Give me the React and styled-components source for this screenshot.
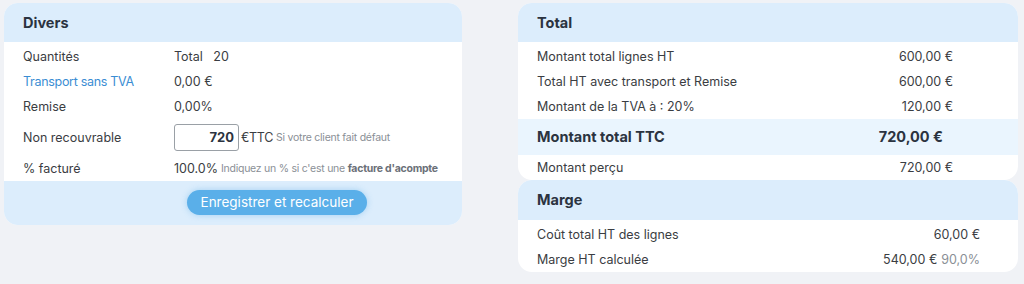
import React from 'react';
import styled, { createGlobalStyle } from 'styled-components';

const colors = {
  page: '#f0f2f6',
  head: '#dcedfc',
  highlight: '#eaf5fe',
  title: '#2b3340',
  text: '#3a3d42',
  muted: '#8a8f96',
  link: '#3b8dd3',
  button: '#5aafe9',
};

const GlobalStyle = createGlobalStyle`
  body {
    margin: 0;
    background: ${colors.page};
    font-family: 'Inter', 'Noto Sans', sans-serif;
    color: ${colors.text};
    -webkit-font-smoothing: antialiased;
  }
`;

const Page = styled.div`
  display: flex;
  align-items: flex-start;
  gap: 56px;
  padding: 3px 4px;
`;

const Card = styled.div`
  width: ${(p) => p.width}px;
  background: white;
  border-radius: 14px;
  overflow: hidden;
`;

const Column = styled.div`
  display: flex;
  flex-direction: column;
  width: 500px;
`;

const CardHead = styled.div`
  height: ${(p) => p.height || 39}px;
  display: flex;
  align-items: center;
  padding-left: 19px;
  background: ${colors.head};
  font-size: 14.5px;
  font-weight: 700;
  color: ${colors.title};
`;

const Body = styled.div`
  padding-top: 1.5px;
`;

const Row = styled.div`
  display: grid;
  grid-template-columns: ${(p) => p.cols || '151px 1fr'};
  align-items: center;
  height: ${(p) => p.height || 25}px;
  padding: 0 ${(p) => p.right || 0}px 0 19px;
  font-size: 12.5px;
  background: ${(p) => (p.strong ? colors.highlight : 'transparent')};
  ${(p) => p.strong && `font-size: 14.5px; font-weight: 700; color: ${colors.title};`}
`;

const Label = styled.span`
  color: ${(p) => (p.link ? colors.link : 'inherit')};
  letter-spacing: ${(p) => (p.link ? '-0.3px' : '0')};
`;

const Value = styled.span`
  display: flex;
  align-items: center;
  white-space: nowrap;
  justify-content: ${(p) => (p.end ? 'flex-end' : 'flex-start')};
`;

const Hint = styled.span`
  margin-left: 3px;
  font-size: 10.5px;
  letter-spacing: -0.25px;
  color: ${colors.muted};
  b {
    font-weight: 700;
    color: #6b7078;
  }
`;

const Pct = styled.span`
  margin-left: 4px;
  color: ${colors.muted};
`;

const Amount = styled.input`
  width: 65px;
  height: 27px;
  box-sizing: border-box;
  border: 1px solid #9aa0a6;
  border-radius: 3px;
  padding: 0 4px;
  text-align: right;
  font-family: inherit;
  font-size: 13px;
  font-weight: 700;
  color: ${colors.title};
  margin-right: 2px;
`;

const Unit = styled.span`
  font-size: 12.5px;
  letter-spacing: -0.3px;
`;

const Footer = styled.div`
  display: flex;
  justify-content: center;
  padding: 9px 0 10px;
  background: ${colors.head};
`;

const Button = styled.button`
  width: 180px;
  height: 25px;
  border: none;
  border-radius: 13px;
  background: ${colors.button};
  color: white;
  font-family: inherit;
  font-size: 13.5px;
  box-shadow: 0 0 6px rgba(90, 175, 233, 0.45);
  margin-left: 88px;
`;

function App() {
  return (
    <>
      <GlobalStyle />
      <Page>
        <Card width={458}>
          <CardHead>Divers</CardHead>
          <Body>
            <Row>
              <Label>Quantités</Label>
              <Value>Total&nbsp;&nbsp;&nbsp;20</Value>
            </Row>
            <Row>
              <Label link>Transport sans TVA</Label>
              <Value>0,00 €</Value>
            </Row>
            <Row>
              <Label>Remise</Label>
              <Value>0,00%</Value>
            </Row>
            <Row height={37}>
              <Label>Non recouvrable</Label>
              <Value>
                <Amount defaultValue="720" />
                <Unit>€TTC</Unit>
                <Hint>Si votre client fait défaut</Hint>
              </Value>
            </Row>
            <Row>
              <Label>% facturé</Label>
              <Value>
                100.0%
                <Hint>
                  Indiquez un % si c'est une <b>facture d'acompte</b>
                </Hint>
              </Value>
            </Row>
          </Body>
          <Footer>
            <Button>Enregistrer et recalculer</Button>
          </Footer>
        </Card>

        <Column>
          <Card width={500}>
            <CardHead>Total</CardHead>
            <Body>
              <Row cols="1fr auto" right={65}>
                <Label>Montant total lignes HT</Label>
                <Value end>600,00 €</Value>
              </Row>
              <Row cols="1fr auto" right={65}>
                <Label>Total HT avec transport et Remise</Label>
                <Value end>600,00 €</Value>
              </Row>
              <Row cols="1fr auto" right={65}>
                <Label>Montant de la TVA à : 20%</Label>
                <Value end>120,00 €</Value>
              </Row>
              <Row cols="1fr auto" right={75} height={36} strong>
                <Label>Montant total TTC</Label>
                <Value end>720,00 €</Value>
              </Row>
              <Row cols="1fr auto" right={65}>
                <Label>Montant perçu</Label>
                <Value end>720,00 €</Value>
              </Row>
            </Body>
          </Card>
          <Card width={500}>
            <CardHead height={40}>Marge</CardHead>
            <Body>
              <Row cols="1fr auto" right={38} height={26}>
                <Label>Coût total HT des lignes</Label>
                <Value end>60,00 €</Value>
              </Row>
              <Row cols="1fr auto" right={38}>
                <Label>Marge HT calculée</Label>
                <Value end>
                  540,00 €<Pct>90,0%</Pct>
                </Value>
              </Row>
            </Body>
          </Card>
        </Column>
      </Page>
    </>
  );
}

export default App;
